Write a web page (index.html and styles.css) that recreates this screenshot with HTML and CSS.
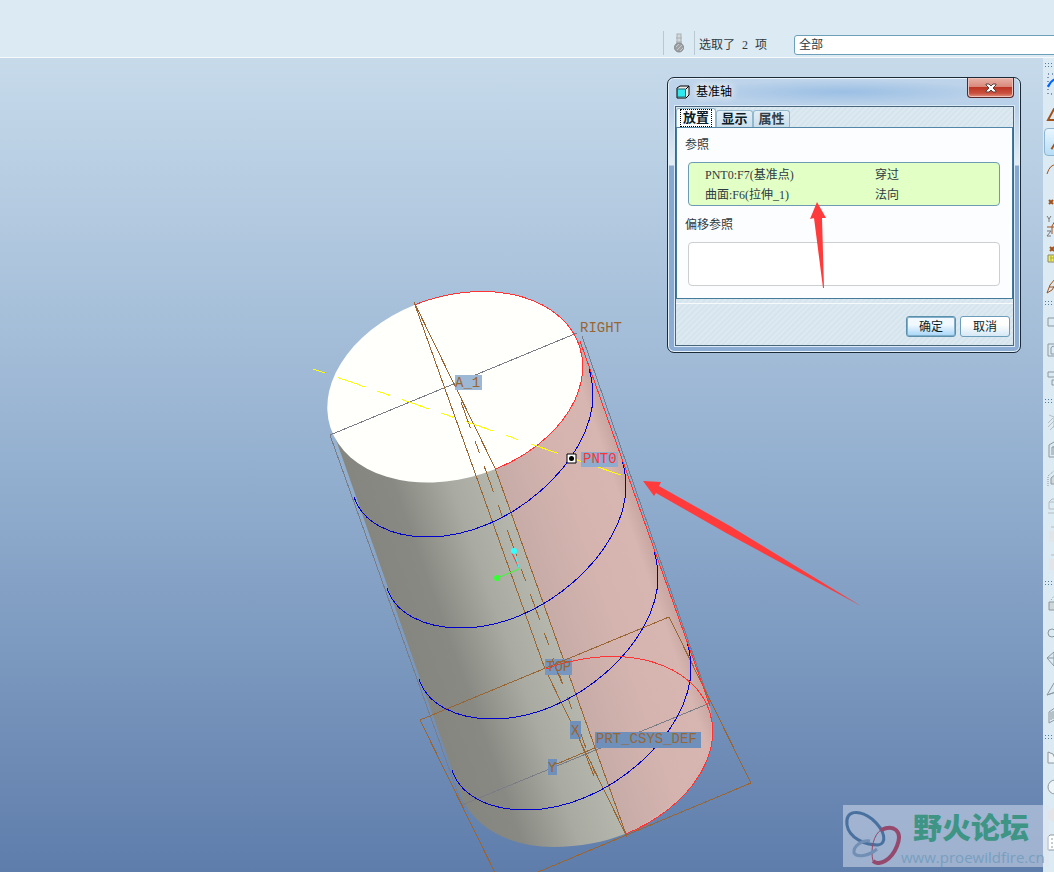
FILE: index.html
```html
<!DOCTYPE html>
<html lang="zh-CN">
<head>
  <meta charset="UTF-8">
  <meta name="viewport" content="width=device-width, initial-scale=1.0">
  <title>基准轴</title>
  <link rel="stylesheet" href="styles.css">
</head>
<body>
  <header class="status-bar">
    <span class="lamp">
      <svg width="14" height="20" viewBox="0 0 14 20">
        <rect x="5" y="1" width="4" height="10" fill="#d3d8da" stroke="#a9b0b3"/>
        <path d="M4 5h6M4 9h6" stroke="#a9b0b3"/>
        <circle cx="7" cy="14.500" r="4.500" fill="#9da1a3" stroke="#85898b"/>
        <path d="M4 14l3-3M5 17l5-5M8 18l3-3" stroke="#c4c8ca"/>
      </svg>
    </span>
    <label class="selected-count" for="filter"><span>选取了</span><span>2</span><span>项</span></label>
    <select id="filter" class="filter">
      <option>全部</option>
    </select>
  </header>

  <main class="workspace">
    <section class="viewport">
      <svg class="model" width="1043" height="814" viewBox="0 58 1043 814">
        <defs>
          <linearGradient id="steel" gradientUnits="userSpaceOnUse" x1="370" y1="580" x2="540" y2="519">
            <stop offset="0" stop-color="#84857e"/>
            <stop offset="0.300" stop-color="#888982"/>
            <stop offset="0.600" stop-color="#a9aaa1"/>
            <stop offset="1" stop-color="#bcbdb3"/>
          </linearGradient>
          <linearGradient id="picked" gradientUnits="userSpaceOnUse" x1="525" y1="560" x2="647" y2="517">
            <stop offset="0" stop-color="#c6aba7"/>
            <stop offset="0.500" stop-color="#d5b4af"/>
            <stop offset="0.850" stop-color="#d7b5b0"/>
            <stop offset="1" stop-color="#c3a39f"/>
          </linearGradient>
          <clipPath id="picked-side">
            <path d="M415 200V304L495 468L625 834L645 872H900V200Z"/>
          </clipPath>
          <clipPath id="picked-base">
            <path d="M511 600L545 669L625 834L643 872H900V600Z"/>
          </clipPath>
          <!-- side wall swept down to the base -->
          <path id="wall" d="M334 434L463 801L585 752L710 706L580 341L455 387Z"/>
          <path id="ring" d="M-131 0A131 91 0 0 1 131 0A131 91 0 0 1 -131 0Z"/>
          <path id="turn" d="M354 497C362 522 390 537 428 537C510 537 593 460 593 395C593 385 591 376 589 368"/>
        </defs>

        <!-- cylinder faces -->
        <g fill="url(#steel)">
          <use href="#wall"/>
          <path d="M463 801C480 832 515 847 553 847C580 847 604 842 625 834L592 740Z"/>
        </g>
        <g clip-path="url(#picked-side)">
          <use href="#wall" fill="url(#picked)"/>
          <use href="#ring" fill="#d5b4af" transform="translate(585 752) rotate(-18)"/>
          <path fill="url(#picked)" d="M495 468L580 341L710 706Q716 740 700 765Q670 815 625 834Z"/>
        </g>
        <use href="#ring" fill="#fffffb" transform="translate(455 387) rotate(-18)"/>

        <g class="line">
          <!-- datum planes -->
          <path class="plane-back" d="M577 333L330 435L462 805L710 703L582 336"/>
          <path class="plane" d="M414 302L545 669L627 837L495 468Z"/>
          <path class="plane" d="M420 720L669 617L751 783L502 887Z"/>
          <path class="plane" d="M552 766L597 747M575 728L594 776"/>
          <path class="axis" d="M461 402L596 776"/>

          <!-- thread -->
          <g class="thread">
            <use href="#turn"/>
            <use href="#turn" x="33" y="91"/>
            <use href="#turn" x="65" y="182"/>
            <use href="#turn" x="98" y="273"/>
          </g>

          <!-- picked surface edges -->
          <g clip-path="url(#picked-side)">
            <use href="#ring" class="edge" transform="translate(455 387) rotate(-18)"/>
          </g>
          <g clip-path="url(#picked-base)">
            <use href="#ring" class="edge" transform="translate(585 752) rotate(-18)"/>
          </g>
          <path class="edge" d="M580 341L710 706"/>
          <path class="new-axis" d="M313 369L621 475"/>
        </g>

        <!-- spin centre -->
        <path d="M512 553L519 568" stroke="#f33"/>
        <path d="M514 551L519 568" stroke="#3ff"/>
        <path d="M497 578L519 569" stroke="#3f3"/>
        <circle cx="514" cy="551" r="3" fill="#3ff"/>
        <circle cx="497" cy="578" r="3" fill="#3f3"/>

        <g class="tags">
          <path fill="#9db8d4" d="M455 375h27v15h-27z"/>
          <path fill="#8fabcd" d="M581 452h37v15h-37z"/>
          <path fill="#7797c1" d="M545 659h27v16h-27z"/>
          <path fill="#6f90bb" d="M595 732h106v16h-106zM570 721h11v18h-11zM548 759h9v16h-9z"/>
          <path class="plane line" d="M546 668L572 657M552 659L562 683M575 728L581 742M552 766L557 763"/>
          <path class="edge line" d="M546 669Q558 664 572 661"/>
          <text x="580" y="332">RIGHT</text>
          <text x="455" y="387">A_1</text>
          <text x="583" y="463" class="picked-tag">PNT0</text>
          <text x="546" y="671">TOP</text>
          <text x="596" y="743">PRT_CSYS_DEF</text>
          <text x="571" y="735">X</text>
          <text x="548" y="772">Y</text>
        </g>
        <path d="M567 454h9v9h-9z" fill="#fff" stroke="#000"/>
        <circle cx="571.500" cy="458.500" r="2.500"/>
      </svg>

      <section class="dialog" aria-labelledby="dialog-title">
        <div class="title-bar">
          <svg width="14" height="14" viewBox="0 0 14 14">
            <path d="M1 3l3-2h9v9l-3 3H1z" fill="#e8e8e8" stroke="#000"/>
            <path d="M1.500 4h8v8h-8z" fill="#2ee9ee" stroke="#267"/>
            <path d="M10 4l3-3" stroke="#000"/>
          </svg>
          <h1 id="dialog-title">基准轴</h1>
          <button class="close" type="button" aria-label="关闭">
            <svg width="12" height="10" viewBox="0 0 12 10">
              <path d="M1 1h3l2 2 2-2h3v1L8 5l3 3v1H8L6 7 4 9H1V8l3-3-3-3z" fill="#fff" stroke="#59413f"/>
            </svg>
          </button>
        </div>
        <div class="dialog-body">
          <div class="tabs" role="tablist">
            <button class="tab active" type="button" role="tab" aria-selected="true"><span>放置</span></button>
            <button class="tab" type="button" role="tab" aria-selected="false">显示</button>
            <button class="tab muted" type="button" role="tab" aria-selected="false">属性</button>
          </div>
          <div class="panel">
            <h2>参照</h2>
            <table class="references">
              <tr><td>PNT0:F7(基准点)</td><td>穿过</td></tr>
              <tr><td>曲面:F6(拉伸_1)</td><td>法向</td></tr>
            </table>
            <h2>偏移参照</h2>
            <div class="offsets"></div>
          </div>
          <div class="actions">
            <button class="action primary" type="button">确定</button>
            <button class="action" type="button">取消</button>
          </div>
        </div>
      </section>

      <svg class="arrows" width="1043" height="814" viewBox="0 58 1043 814">
        <path d="M817 202L826 218L822 218L824 288L823 288L814 218L810 219Z"/>
        <path d="M643 481L661 482L659 486L730 526L861 606L728 534L656 493L654 496Z"/>
      </svg>
    </section>

    <nav class="toolbox">
      <div class="group">
        <svg class="tool" viewBox="0 0 24 28"><path d="M2 2h20v20H2z" stroke="#247" stroke-dasharray="1 3"/><path d="M2 15q3-7 8-8" stroke="#06f" stroke-width="2"/></svg>
        <svg class="tool" viewBox="0 0 24 28"><path d="M2 20L8 9h12l-6 11z" stroke="#a0521d" stroke-width="2"/></svg>
        <svg class="tool on" viewBox="0 0 24 28"><path d="M7 22L18 4" stroke="#a0521d" stroke-width="2"/></svg>
        <svg class="tool" viewBox="0 0 24 28"><path d="M1 18Q4 8 10 9T20 6" stroke="#a0521d"/></svg>
        <svg class="tool" viewBox="0 0 24 28"><path d="M3 16l4 4M7 16l-4 4" stroke="#a0521d" stroke-width="2"/></svg>
        <svg class="tool" viewBox="0 0 24 28"><path d="M1 4l2 3 2-3M3 7v3M1 19h4l-4 5h4" stroke="#777"/><path d="M1 15h18M6 22v-8l3-5" stroke="#a0521d"/></svg>
        <svg class="tool" viewBox="0 0 24 28"><path d="M4 7l4 4M8 7l-4 4" stroke="#a0521d" stroke-width="2"/><path d="M2 15h12v7H2z" fill="#ee6" stroke="#886"/><path d="M4 18h9M5 16v5M8 16v5" stroke="#aa3"/></svg>
        <svg class="tool" viewBox="0 0 24 28"><path d="M1 25q2-9 8-14M1 25l5-3 3-5M3 19h5" stroke="#a0521d"/></svg>
      </div>
      <div class="group">
        <svg class="tool off" viewBox="0 0 24 28"><path d="M2 8h16v8H2z"/></svg>
        <svg class="tool off" viewBox="0 0 24 28"><path d="M2 6h16v12H2zM5 16v-6q0-2 4-2v8z"/></svg>
        <svg class="tool off" viewBox="0 0 24 28"><path d="M2 6h15v5H2zM6 14h12v5H6z"/></svg>
      </div>
      <div class="group">
        <svg class="tool faint" viewBox="0 0 24 28"><path d="M3 7l5 2v11M2 15l5-5M2 19l8-8M4 22l8-8"/></svg>
        <svg class="tool off" viewBox="0 0 24 28"><path d="M3 21V9l5-3h10v15zM6 19v-8h9v8M8 10v9"/></svg>
        <svg class="tool off" viewBox="0 0 24 28"><path d="M2 22V12l7-6" stroke-dasharray="1 1"/><path d="M5 20v-6l5-4v10z" fill="#cfd7da"/></svg>
        <svg class="tool faint" viewBox="0 0 24 28"><path d="M3 10l3-3h12M3 10h15v7H3zM2 21h16"/></svg>
        <svg class="tool faint" viewBox="0 0 24 28"><path d="M5 7h12"/><path d="M3 11h15v11H3z" fill="#e1e5e8" stroke="none"/></svg>
        <svg class="tool faint" viewBox="0 0 24 28"><path d="M5 7h12"/><path d="M3 11h15v11H3z" fill="#e1e5e8" stroke="none"/></svg>
      </div>
      <div class="group">
        <svg class="tool off" viewBox="0 0 24 28"><path d="M3 12h15v8H3z" fill="#cfd7da"/><path d="M5 10l3-4" stroke-dasharray="1 2"/></svg>
        <svg class="tool off" viewBox="0 0 24 28"><circle cx="6" cy="15" r="4"/><path d="M8 11l8-2M8 19l8-2"/></svg>
        <svg class="tool off" viewBox="0 0 24 28"><path d="M1 12l7-6 8 6-8 8zM1 12h15M8 6v14"/></svg>
        <svg class="tool off" viewBox="0 0 24 28"><path d="M1 21l7-12 10-3v9zM1 21l12-4"/></svg>
        <svg class="tool off" viewBox="0 0 24 28"><path d="M3 21V10l7-5v12zM5 10v8M7 9v8"/></svg>
      </div>
      <div class="group">
        <svg class="tool off" viewBox="0 0 24 28"><path d="M2 8l5 2q2 6 5 9H2z" fill="#eef4f8"/></svg>
        <svg class="tool off" viewBox="0 0 24 28"><circle cx="9" cy="15" r="7" fill="#eef4f8"/></svg>
        <svg class="tool faint" viewBox="0 0 24 28"><circle cx="9" cy="15" r="7" fill="#e4e3e6" stroke="none"/></svg>
        <svg class="tool off" viewBox="0 0 24 28"><path d="M2 22V9l2-2h14v15z" fill="#fff"/><path d="M5 11h2M5 15h2M5 19h2"/></svg>
      </div>
    </nav>

    <div class="watermark">
      <svg width="58" height="58" viewBox="0 0 58 58" fill="none">
        <path d="M4 18C2 3 16 2 29 12C43 24 44 37 35 38C22 38 6 31 4 18Z" stroke="#49719f" stroke-width="3"/>
        <path d="M38 23C51 17 60 24 54 39C48 54 36 59 30 54" stroke="#95496c" stroke-width="4"/>
        <path d="M38 23C31 27 27 42 30 54" stroke="#95496c" stroke-width="1"/>
        <path d="M27 34C19 33 10 39 11 46C14 51 26 49 34 42" stroke="#718eb5" stroke-width="3"/>
      </svg>
      <div class="watermark-text">
        <strong>野火论坛</strong>
        <span>www.proewildfire.cn</span>
      </div>
    </div>
  </main>
</body>
</html>
```
FILE: styles.css
```css
* {
  box-sizing: border-box;
}

body {
  margin: 0;
  height: 100vh;
  display: flex;
  flex-direction: column;
  overflow: hidden;
  font: 12px/20px "Liberation Serif", "Noto Sans CJK SC", sans-serif;
  color: #2d3a42;
  background: #dceaf3;
}

button,
select {
  font: inherit;
  color: inherit;
}

.status-bar {
  display: flex;
  justify-content: flex-end;
  align-items: flex-end;
  flex: none;
  height: 58px;
  padding-bottom: 2px;
  border-bottom: 1px solid #f4f9fc;
  overflow: hidden;
}

.lamp {
  display: flex;
  align-items: center;
  justify-content: center;
  width: 32px;
  height: 24px;
  border-left: 1px solid #b9c8d1;
  border-right: 1px solid #b9c8d1;
}

.selected-count {
  display: flex;
  gap: 7px;
  width: 99px;
  padding-left: 4px;
}

.filter {
  flex: none;
  width: 280px;
  height: 20px;
  margin-right: -20px;
  padding: 0 4px;
  border: 1px solid #6d9fb9;
  border-radius: 3px;
  background: #fff;
  line-height: 18px;
  appearance: none;
}

.workspace {
  position: relative;
  display: flex;
  flex: 1;
  min-height: 0;
}

.viewport {
  position: relative;
  flex: 1;
  overflow: hidden;
  background: linear-gradient(#c6daea, #94b0d0 50%, #5f7dab);
}

.model,
.arrows {
  position: absolute;
  top: 0;
  left: 0;
}

.arrows {
  fill: #ff3b3b;
  pointer-events: none;
}

.line {
  fill: none;
  shape-rendering: crispEdges;
}

.plane,
.axis {
  stroke: #996633;
}

.plane-back {
  stroke: #7b7d86;
}

.axis {
  stroke-dasharray: 28 14 12 14;
}

.new-axis {
  stroke: #ffff00;
  stroke-dasharray: 13 13 29 13;
}

.thread {
  stroke: #0000cc;
}

.edge {
  stroke: #ff3333;
}

.tags text {
  font: 14px "Liberation Mono", monospace;
  fill: #996633;
}

.tags .picked-tag {
  fill: #ff3333;
}

.watermark {
  position: absolute;
  right: 5px;
  bottom: 5px;
  display: flex;
  align-items: center;
  width: 206px;
  height: 62px;
  background: rgba(220, 228, 242, 0.5);
}

.watermark svg {
  flex: none;
}

.watermark-text {
  display: flex;
  flex-direction: column;
  white-space: nowrap;
}

.watermark strong {
  padding-left: 12px;
  font: 900 29px/42px "Noto Sans CJK SC", sans-serif;
  color: #3f9585;
}

.watermark span {
  font: 15px/20px "Open Sans", sans-serif;
  color: #779fbf;
}

.dialog {
  position: absolute;
  top: 19px;
  right: 22px;
  width: 354px;
  padding: 0 6px 6px 7px;
  border: 1px solid #1c2936;
  border-radius: 7px;
  background: linear-gradient(#bed4ea, #b8d0e9 30px, #e4edf5 87px, #86a8d0 88px, #8cacd3);
  box-shadow: inset 0 0 0 1px #e6f2fb;
}

.title-bar {
  display: flex;
  align-items: center;
  height: 28px;
  padding-left: 1px;
  background: radial-gradient(ellipse at 50% 50%, #9bbfe4, transparent 60%);
}

.title-bar h1 {
  flex: 1;
  margin: 0 0 0 6px;
  font-size: 12px;
  font-weight: 400;
  color: #000;
  text-shadow: 0 0 8px #fff, 0 0 8px #fff;
}

.close {
  display: flex;
  align-items: center;
  justify-content: center;
  align-self: flex-start;
  width: 47px;
  height: 20px;
  border: 1px solid #58282a;
  border-top: 0;
  border-radius: 0 0 4px 4px;
  background: linear-gradient(#e8b2a7, #d8877a 48%, #bd3524 50%, #c9503d 80%, #e09480);
  box-shadow: inset 0 0 0 1px #efc1b8;
}

.dialog-body {
  border: 1px solid #49657c;
  outline: 1px solid #d9e9f5;
  background: repeating-linear-gradient(135deg, #d6e4ed 0 2px, #dce9f1 2px 4px);
}

.tabs {
  display: flex;
  align-items: flex-end;
  height: 20px;
}

.tab {
  width: 37px;
  height: 17px;
  padding: 0;
  border: 1px solid #91b8cd;
  border-bottom: 0;
  border-radius: 3px 3px 0 0;
  background: linear-gradient(#e3eef6, #cbdeea);
  font-weight: 700;
  font-size: 13px;
  line-height: 16px;
  color: #0b1c26;
}

.tab.active {
  width: 40px;
  height: 19px;
  background: #fbfdff;
}

.tab.active span {
  display: block;
  margin: 0 4px;
  outline: 1px dotted #000;
  line-height: 16px;
}

.tab.muted {
  color: #31414c;
}

.panel {
  padding: 7px 12px 12px 11px;
  border: 1px solid #467a9d;
  border-top-color: #5387a8;
  background: #fbfdff;
}

.panel h2 {
  margin: 0 0 7px -3px;
  font-size: 12px;
  font-weight: 400;
  line-height: 20px;
}

.references,
.offsets {
  width: 100%;
  height: 44px;
  border: 1px solid #6e9bb4;
  border-radius: 4px;
}

.references {
  margin-bottom: 9px;
  padding: 2px 0 0;
  border-collapse: separate;
  border-spacing: 0;
  background: #e2ffc6;
}

.references td {
  width: 40%;
  padding: 0;
  line-height: 20px;
}

.references td:first-child {
  width: 60%;
  padding-left: 16px;
}

.offsets {
  border-color: #cccfd0;
  background: #fff;
}

.actions {
  display: flex;
  justify-content: flex-end;
  gap: 4px;
  margin-top: 4px;
  padding: 12px 3px 8px;
  border-top: 1px solid #f6fafc;
}

.action {
  width: 50px;
  height: 21px;
  padding: 0;
  border: 1px solid #6c9dbb;
  border-radius: 3px;
  background: linear-gradient(#fff 40%, #d5e8f5);
  line-height: 18px;
  color: #0b1c26;
}

.action.primary {
  border-color: #5c8fac;
  background: linear-gradient(#f2f9fe 40%, #a5d5f8);
  box-shadow: inset 0 0 0 1px #82afc9;
}

.toolbox {
  flex: none;
  width: 11px;
  overflow: hidden;
  background: #dceaf3;
}

.group::before {
  content: "";
  display: block;
  height: 14px;
  margin-left: 1px;
  background: radial-gradient(circle, #4b81a5 1px, transparent 1px) 0 4px / 3px 3px;
  clip-path: inset(4px 0 5px 0);
}

.tool {
  display: block;
  width: 24px;
  height: 28px;
  margin-left: 3px;
  fill: none;
}

.tool.on {
  margin-left: 1px;
  border: 1px solid #8db5d0;
  border-radius: 4px;
  background: linear-gradient(#e9f6ff, #b7ddf5);
}

.tool.off {
  stroke: #8d989e;
}

.tool.faint {
  stroke: #b4bdc1;
}
```
